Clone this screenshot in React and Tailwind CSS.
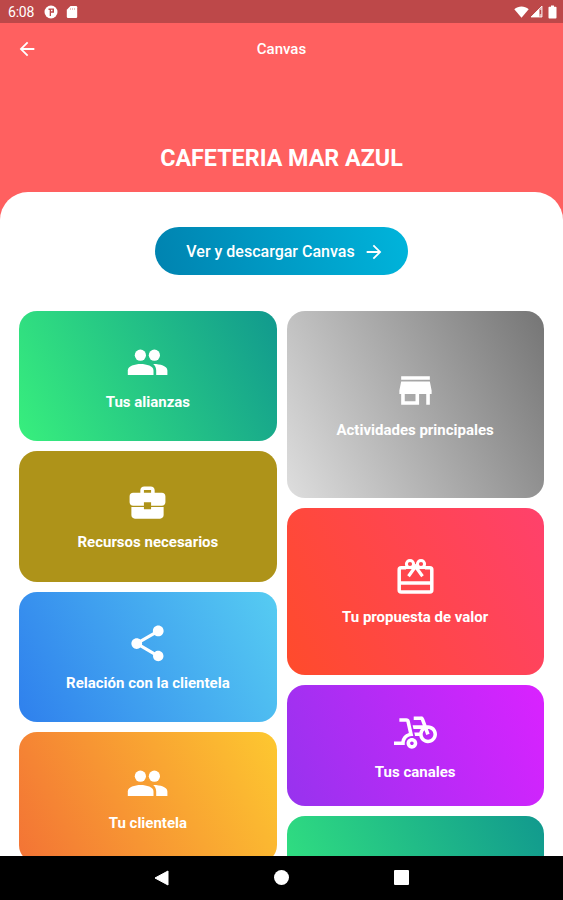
import React from 'react';
import { MdArrowBack, MdArrowForward, MdStore, MdShare, MdBikeScooter } from 'react-icons/md';

function People({ className }) {
  return (
    <svg viewBox="0 0 43 43" fill="currentColor" className={className}>
      <circle cx="14.4" cy="14.2" r="5.600" />
      <circle cx="28.400" cy="14.2" r="5.600" />
      <path d="M1.800 34v-4.600c0-4.100 7-6.300 12.900-6.300s12.800 2.200 12.800 6.300V34z" />
      <path d="M27.200 23.100c6.500-.1 14.200 1.900 14.200 6.300V34H30.200v-4.600c0-2.600-1.200-4.700-3-6.300z" />
    </svg>
  );
}

function Gift({ className }) {
  return (
    <svg viewBox="0 0 43 43" fill="none" stroke="currentColor" className={className}>
      <path d="M12 11.800H7.200a2 2 0 0 0-2 2V34a2 2 0 0 0 2 2h28.600a2 2 0 0 0 2-2V13.800a2 2 0 0 0-2-2H31" strokeWidth="3.500" />
      <path d="M5 27h33" strokeWidth="3.500" />
      <circle cx="16" cy="8" r="3.600" strokeWidth="3" />
      <circle cx="27" cy="8" r="3.600" strokeWidth="3" />
      <path d="M12 11.800h19" strokeWidth="2.500" />
      <path d="M14.500 20.200l7-9.700 7 9.700" strokeWidth="3.200" />
    </svg>
  );
}

function Briefcase({ className }) {
  return (
    <svg viewBox="0 0 24 24" fill="currentColor" className={className}>
      <path
        fillRule="evenodd"
        d="M8 6.6V5.2C8 3.9 8.9 3 10.2 3h3.6C15.1 3 16 3.9 16 5.2v1.4h4c1.2 0 2 .8 2 2v3.3c0 1.1-.8 1.9-2 1.9h-6v-2h-4v2H4c-1.2 0-2-.8-2-1.9V8.600c0-1.2.8-2 2-2zm2 0h4V5h-4z"
      />
      <path d="M3 14.5h7v1.200h4v-1.200h7V19c0 1.2-.8 2-2 2H5c-1.2 0-2-.8-2-2z" />
    </svg>
  );
}

function Card({ icon: Icon, label, className }) {
  return (
    <div className={`flex shrink-0 flex-col items-center justify-center rounded-[18px] text-white ${className}`}>
      {Icon && <Icon className="mt-px size-[43px]" />}
      {label && <span className="mt-[8px] whitespace-nowrap text-[15px] leading-[20px] font-bold">{label}</span>}
    </div>
  );
}

function StatusBar() {
  return (
    <div className="flex h-[23px] shrink-0 items-center bg-[#bd4849] pr-[6px] pl-[8px] text-white">
      <span className="w-[36px] pt-px text-[14px] leading-[23px] tracking-[-0.2px]">6:08</span>
      <svg viewBox="0 0 14 14" className="size-[14px]">
        <circle cx="7" cy="7" r="6.5" fill="#fff" />
        <path d="M4.500 3.500H10v4.300H7V11H5.700V5H4.500z" fill="#bd4849" />
        <path d="M7 4.800h1.500v1.500H7z" fill="#fff" />
      </svg>
      <svg viewBox="0 0 12 14" className="ml-[8px] h-[14px] w-[12px]">
        <path d="M4.500 1H10a1.200 1.200 0 0 1 1.200 1.200v9.600A1.200 1.200 0 0 1 10 13H2a1.200 1.200 0 0 1-1.200-1.200V4.700z" fill="#fff" />
        <path d="M4.500 3v2M6.500 3v2M8.500 3v2" stroke="#dfa3a4" strokeWidth=".7" />
      </svg>
      <div className="ml-auto flex items-center">
        <svg viewBox="0 0 15 12" className="h-[12px] w-[15px]">
          <path d="M.3 3.300C4.500-.5 10.500-.5 14.700 3.300L7.500 11.800z" fill="#fff" />
        </svg>
        <svg viewBox="0 0 13 13" className="ml-[1px] size-[13px]">
          <path d="M12 1v11H1z" fill="#fff" fillOpacity=".55" />
          <path d="M9 4v8H1z" fill="#fff" />
          <path d="M12 1v11H1z" fill="none" stroke="#fff" strokeWidth=".8" />
          <path d="M10.500 5v4" stroke="#bd4849" strokeWidth="1.300" />
        </svg>
        <svg viewBox="0 0 9 14" className="ml-[5px] h-[14px] w-[9px]">
          <path d="M3 .5h3v1.300h1.700c.5 0 .8.3.8.8v10c0 .5-.3.900-.8.900H1.300c-.5 0-.8-.4-.8-.9v-10c0-.5.3-.8.8-.8H3z" fill="#fff" />
        </svg>
      </div>
    </div>
  );
}

export default function App() {
  return (
    <div className="flex h-[900px] w-[563px] flex-col overflow-hidden bg-[#ff6060] font-['Roboto',sans-serif]">
      <StatusBar />
      <header className="grid h-[52px] shrink-0 grid-cols-[1fr_auto_1fr] items-center px-[16px] text-white">
        <MdArrowBack className="size-[22px]" />
        <h1 className="pt-px text-[15px] font-medium">Canvas</h1>
      </header>
      <h2 className="mt-[67px] shrink-0 text-center text-[23.300px] leading-[32px] font-bold text-white">CAFETERIA MAR AZUL</h2>
      <main className="mt-[17.500px] flex min-h-0 flex-1 flex-col items-center overflow-hidden rounded-t-[28px] bg-white">
        <button className="mt-[35.500px] flex h-[48px] w-[253px] shrink-0 items-center justify-center rounded-full bg-[linear-gradient(79deg,#0083b0,#00b4db)] pt-px pl-[8px] text-white">
          <span className="text-[16px] font-medium whitespace-nowrap">Ver y descargar Canvas</span>
          <MdArrowForward className="ml-[8px] size-[22px]" />
        </button>
        <div className="mt-[35.500px] flex w-full gap-[10px] px-[19.250px]">
          <div className="flex flex-1 flex-col gap-[10px]">
            <Card icon={People} label="Tus alianzas" className="h-[130.500px] bg-[linear-gradient(63deg,#38ef7d,#11998e)]" />
            <Card icon={Briefcase} label="Recursos necesarios" className="h-[130.500px] bg-[#ae9319]" />
            <Card icon={MdShare} label="Relación con la clientela" className="h-[130.500px] bg-[linear-gradient(63deg,#2f80ed,#56ccf2)]" />
            <Card icon={People} label="Tu clientela" className="h-[130.500px] bg-[linear-gradient(63deg,#f37335,#fdc830)]" />
          </div>
          <div className="flex flex-1 flex-col gap-[10px]">
            <Card icon={MdStore} label="Actividades principales" className="h-[187px] bg-[linear-gradient(63deg,#dedede,#757575)]" />
            <Card icon={Gift} label="Tu propuesta de valor" className="h-[167.500px] bg-[linear-gradient(63deg,#ff4b2b,#ff416c)]" />
            <Card icon={MdBikeScooter} label="Tus canales" className="h-[121px] bg-[linear-gradient(65deg,#9733ee,#da22ff)]" />
            <Card className="h-[187px] bg-[linear-gradient(63deg,#38ef7d,#11998e)]" />
          </div>
        </div>
      </main>
      <nav className="flex h-[44.500px] shrink-0 items-center justify-center gap-[105px] bg-black text-white">
        <svg viewBox="0 0 15 16" className="h-[16px] w-[15px]" fill="currentColor">
          <path d="M14 1v14L1 8z" stroke="currentColor" strokeLinejoin="round" />
        </svg>
        <span className="size-[15px] rounded-full bg-white" />
        <span className="size-[15px] rounded-[1px] bg-white" />
      </nav>
    </div>
  );
}
